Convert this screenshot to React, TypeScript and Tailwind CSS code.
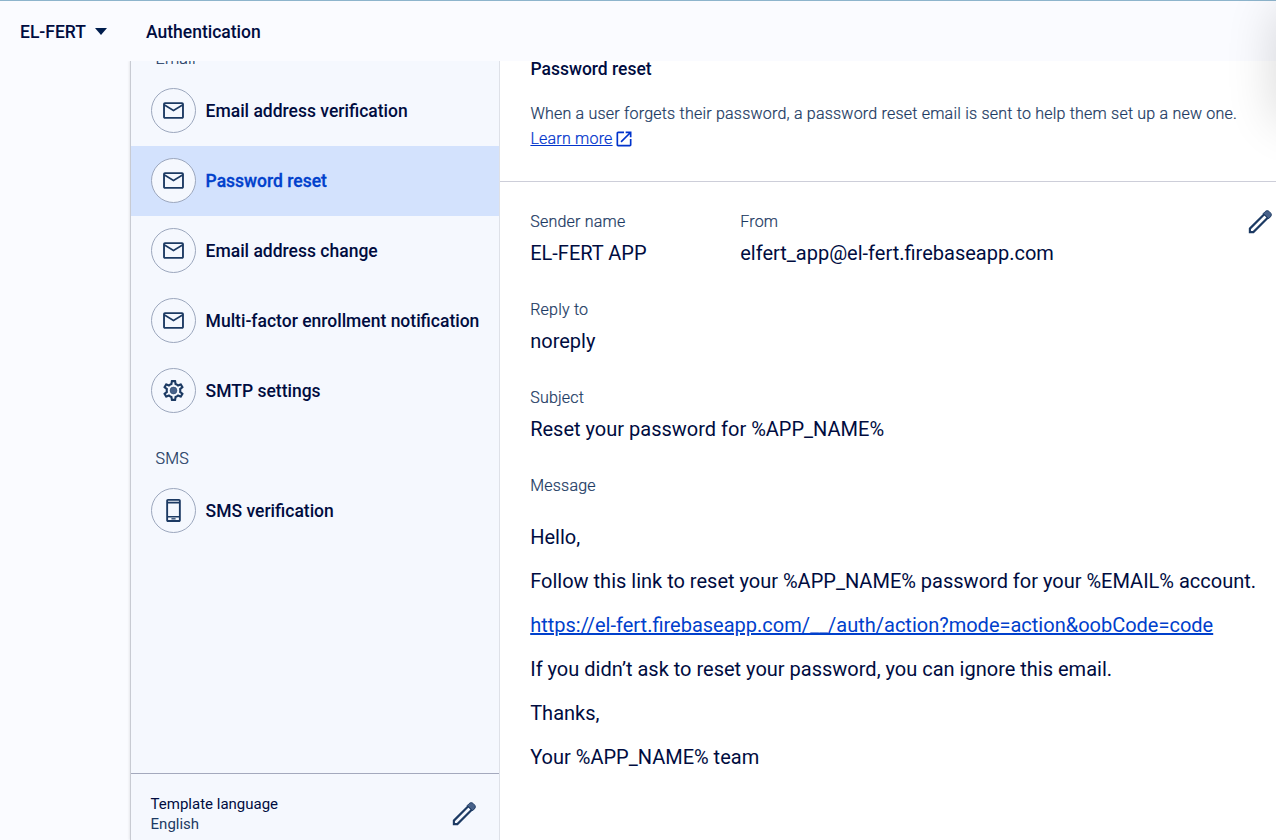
import type { ReactNode } from "react";

function MailIcon() {
  return (
    <svg width="25" height="25" viewBox="0 0 24 24" fill="#1c3a63">
      <path d="M20.2 4H3.8C2.8 4 2 4.8 2 5.8v12.4c0 1 .8 1.8 1.8 1.8h16.4c1 0 1.8-.8 1.8-1.8V5.8c0-1-.8-1.8-1.8-1.8zm0 14.2H3.8V7.8l8.2 5.1 8.2-5.1v10.4zM12 11.1 3.8 6V5.8h16.4V6L12 11.1z" />
    </svg>
  );
}

function GearIcon() {
  return (
    <svg width="25" height="25" viewBox="0 0 24 24" fill="#1c3a63">
      <path d="M19.43 12.98c.04-.32.07-.64.07-.98 0-.34-.03-.66-.07-.98l2.11-1.65c.19-.15.24-.42.12-.64l-2-3.46c-.09-.16-.26-.25-.44-.25-.06 0-.12.01-.17.03l-2.49 1c-.52-.4-1.08-.73-1.69-.98l-.38-2.65C14.46 2.18 14.25 2 14 2h-4c-.25 0-.46.18-.49.42l-.38 2.65c-.61.25-1.17.59-1.69.98l-2.49-1c-.06-.02-.12-.03-.18-.03-.17 0-.34.09-.43.25l-2 3.46c-.13.22-.07.49.12.64l2.11 1.65c-.04.32-.07.65-.07.98 0 .33.03.66.07.98l-2.11 1.65c-.19.15-.24.42-.12.64l2 3.46c.09.16.26.25.44.25.06 0 .12-.01.17-.03l2.49-1c.52.4 1.08.73 1.69.98l.38 2.65c.03.24.24.42.49.42h4c.25 0 .46-.18.49-.42l.38-2.65c.61-.25 1.17-.59 1.69-.98l2.49 1c.06.02.12.03.18.03.17 0 .34-.09.43-.25l2-3.46c.12-.22.07-.49-.12-.64l-2.11-1.65zm-1.98-1.71c.04.31.05.52.05.73 0 .21-.02.43-.05.73l-.14 1.13.89.7 1.08.84-.7 1.21-1.27-.51-1.04-.42-.9.68c-.43.32-.84.56-1.25.73l-1.06.43-.16 1.13-.2 1.35h-1.4l-.19-1.35-.16-1.13-1.06-.43c-.43-.18-.83-.41-1.23-.71l-.91-.7-1.06.43-1.27.51-.7-1.21 1.08-.84.89-.7-.14-1.13c-.03-.31-.05-.54-.05-.74s.02-.43.05-.73l.14-1.13-.89-.7-1.08-.84.7-1.21 1.27.51 1.04.42.9-.68c.43-.32.84-.56 1.25-.73l1.06-.43.16-1.13.2-1.35h1.39l.19 1.35.16 1.13 1.06.43c.43.18.83.41 1.23.71l.91.7 1.06-.43 1.27-.51.7 1.21-1.07.85-.89.7.14 1.13z" />
      <circle cx="12" cy="12" r="3.3" fill="#48628a" stroke="#1c3a63" strokeWidth=".5" />
    </svg>
  );
}

function PhoneIcon() {
  return (
    <svg width="25" height="25" viewBox="0 0 24 24" fill="#1c3a63">
      <path fillRule="evenodd" d="M17.3 1H6.7C5.7 1 5 1.7 5 2.7v18.6c0 1 .7 1.7 1.7 1.7h10.6c1 0 1.7-.7 1.7-1.7V2.7c0-1-.7-1.7-1.7-1.7zM6.8 2.7h10.4v.8H6.8v-.8zm0 2.5h10.4v12.1H6.8V5.2zm0 13.6h10.4v2.4H6.8v-2.4z" />
      <path d="M10 19.4h4v1.2h-4z" />
    </svg>
  );
}

function PencilIcon() {
  return (
    <svg width="30" height="30" viewBox="0 0 24 24" className="block shrink-0">
      <path d="M3.9 17.3 15.6 5.6l2.8 2.8L6.7 20.1H3.9z" fill="none" stroke="#1c3a63" strokeWidth="1.7" />
      <path d="m14.6 5.2 1.5-1.5c1-1 2.3-1 3.2-.1l1.1 1.1c.9.9.9 2.2-.1 3.2l-1.5 1.5z" fill="#48628a" stroke="#1c3a63" strokeWidth=".8" />
    </svg>
  );
}

function OpenIcon() {
  return (
    <svg width="20" height="20" viewBox="0 0 24 24" fill="#0033cc" className="ml-px block">
      <path d="M19 19H5V5h7V3H5c-1.1 0-2 .9-2 2v14c0 1.1.9 2 2 2h14c1.1 0 2-.9 2-2v-7h-2v7zM14 3v2h3.59l-9.83 9.83 1.41 1.41L19 6.41V10h2V3h-7z" />
    </svg>
  );
}

function NavItem({ icon, label, active = false }: { icon: ReactNode; label: string; active?: boolean }) {
  return (
    <div className={`flex h-[70px] shrink-0 items-center gap-[9.6px] pl-5 text-[17.5px] font-medium ${active ? "bg-[#d3e2fd] text-[#0040cc]" : ""}`}>
      <span className="mb-[2px] flex size-[45px] shrink-0 items-center justify-center rounded-full border border-[#9ca7bd] bg-[#f5f8fe] pr-px">
        {icon}
      </span>
      <span className={active ? "[-webkit-text-stroke:0.3px_#0040cc]" : ""}>{label}</span>
    </div>
  );
}

function Field({ label, value }: { label: string; value: string }) {
  return (
    <div className="h-[88px]">
      <div className="h-[31px] text-[16px] font-light leading-6 tracking-[0.215px] text-[#1c3a63] [-webkit-text-stroke:0.2px_#1c3a63]">{label}</div>
      <div className="text-[20px] leading-6">{value}</div>
    </div>
  );
}

export default function App() {
  return (
    <div className="relative flex h-[840px] w-[1276px] flex-col overflow-hidden whitespace-nowrap bg-[#fafbff] font-['Roboto',sans-serif] text-[#000c3f]">
      <header className="flex h-[61px] shrink-0 items-center border-t border-[#8db4cc] pl-5 pt-0.5 text-[17.5px] font-medium">
        <div className="flex w-[126px] items-center gap-[9px]">
          <span>EL-FERT</span>
          <svg width="12" height="7" viewBox="0 0 12 7" fill="#001d4d" className="mb-0.5">
            <path d="M0 0h12L6 7z" />
          </svg>
        </div>
        <span>Authentication</span>
      </header>
      <div className="flex min-h-0 flex-1 pl-[130px]">
        <aside className="flex w-[370px] shrink-0 flex-col border-x border-l-[#c8cbd3] border-r-[#dee1e8] bg-[#f5f8fe] shadow-[-1px_0_2px_rgba(0,0,0,0.08)] [clip-path:inset(0_0_0_-4px)]">
          <div className="flex h-[15px] shrink-0 items-end overflow-hidden pl-[24.6px]">
            <span className="h-[29px] shrink-0 text-[16px] font-light leading-6 tracking-[0.215px] text-[#1c3a63] [-webkit-text-stroke:0.2px_#1c3a63]">Email</span>
          </div>
          <NavItem icon={<MailIcon />} label="Email address verification" />
          <NavItem icon={<MailIcon />} label="Password reset" active />
          <NavItem icon={<MailIcon />} label="Email address change" />
          <NavItem icon={<MailIcon />} label="Multi-factor enrollment notification" />
          <NavItem icon={<GearIcon />} label="SMTP settings" />
          <div className="h-[50px] shrink-0 pl-[24.6px] pt-[21px] text-[16px] font-light leading-6 tracking-[0.215px] text-[#1c3a63] [-webkit-text-stroke:0.2px_#1c3a63]">SMS</div>
          <NavItem icon={<PhoneIcon />} label="SMS verification" />
          <div className="mt-auto flex h-[67px] shrink-0 items-start justify-between border-t border-[#a4a9bd] pl-[19.6px] pr-5 pt-5">
            <div className="text-[15px] leading-5">
              <div>Template language</div>
              <div className="text-[#1c3a63]">English</div>
            </div>
            <div className="pt-[5px]">
              <PencilIcon />
            </div>
          </div>
        </aside>
        <main className="min-w-0 flex-1 bg-white">
          <section className="h-[121px] border-b border-[#cdced9] pl-[30.4px]">
            <h2 className="h-10 text-[17.5px] font-medium leading-4">Password reset</h2>
            <div className="text-[16px] font-light leading-[25px] tracking-[0.215px] text-[#1c3a63]">
              <p className="[-webkit-text-stroke:0.2px_#1c3a63]">When a user forgets their password, a password reset email is sent to help them set up a new one.</p>
              <a className="flex items-center text-[#0033cc] [-webkit-text-stroke:0.2px_#0033cc]">
                <span className="underline">Learn more</span>
                <OpenIcon />
              </a>
            </div>
          </section>
          <section className="flex pl-[30.2px] pt-7">
            <div className="w-[210px] shrink-0">
              <Field label="Sender name" value="EL-FERT APP" />
              <Field label="Reply to" value="noreply" />
              <Field label="Subject" value="Reset your password for %APP_NAME%" />
              <div className="text-[16px] font-light leading-6 tracking-[0.215px] text-[#1c3a63] [-webkit-text-stroke:0.2px_#1c3a63]">Message</div>
              <div className="flex flex-col gap-5 pt-[27px] text-[20px] leading-6">
                <p>Hello,</p>
                <p>Follow this link to reset your %APP_NAME% password for your %EMAIL% account.</p>
                <p className="text-[#0040cc] underline">https://el-fert.firebaseapp.com/__/auth/action?mode=action&amp;oobCode=code</p>
                <p>If you didn’t ask to reset your password, you can ignore this email.</p>
                <p>Thanks,</p>
                <p>Your %APP_NAME% team</p>
              </div>
            </div>
            <div className="flex-1">
              <Field label="From" value="elfert_app@el-fert.firebaseapp.com" />
            </div>
            <div className="-mt-[3px] w-[31px]">
              <PencilIcon />
            </div>
          </section>
        </main>
      </div>
      <div className="pointer-events-none absolute -right-[100px] top-0 h-[110px] w-[100px] shadow-[0_10px_50px_rgba(0,0,0,0.16)]" />
    </div>
  );
}
